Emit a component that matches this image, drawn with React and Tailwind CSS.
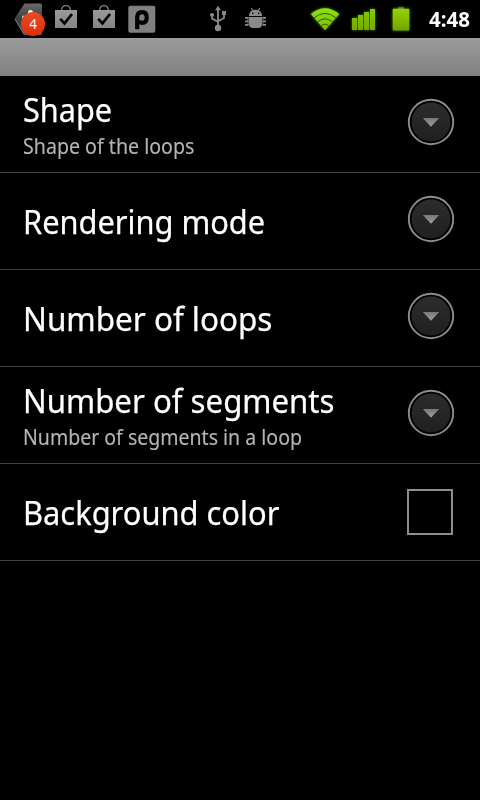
import React from 'react';

function AppBadge() {
  return (
    <svg className="block h-[38px] w-[34px]" viewBox="12 0 34 38">
      <defs>
        <linearGradient id="tag" x1="0" y1="0" x2="0" y2="1">
          <stop offset="0" stopColor="#6a6a6a" />
          <stop offset="0.5" stopColor="#3c3c3c" />
          <stop offset="1" stopColor="#5c5c5c" />
        </linearGradient>
        <linearGradient id="red" x1="0" y1="0" x2="0" y2="1">
          <stop offset="0" stopColor="#ea4a26" />
          <stop offset="1" stopColor="#de2d08" />
        </linearGradient>
      </defs>
      <path d="M24.5 3.5H40.5Q42 3.5 42 5V33.5Q42 35 40.5 35H24.5L15 20V18Z" fill="url(#tag)" />
      <path d="M15 19L24 34.5" stroke="#777" strokeWidth="1" />
      <circle cx="30.5" cy="12.3" r="2.4" fill="#fff" />
      <circle cx="23.5" cy="17" r="1.5" fill="#ccc" />
      <circle cx="33" cy="24" r="12" fill="url(#red)" />
      <text x="33" y="29" textAnchor="middle" fontSize="13.5" fill="#fff" fontFamily="Noto Sans, sans-serif">4</text>
    </svg>
  );
}

function BagIcon() {
  return (
    <svg className="block h-[38px] w-[22px]" viewBox="55 0 22 38">
      <defs>
        <linearGradient id="bag" x1="0" y1="0" x2="0" y2="1">
          <stop offset="0" stopColor="#999" />
          <stop offset="1" stopColor="#858585" />
        </linearGradient>
      </defs>
      <path d="M61.6 10.5C61.6 4 70.4 4 70.4 10.5" fill="none" stroke="#808080" strokeWidth="1.4" />
      <rect x="55" y="10" width="22" height="18" fill="url(#bag)" />
      <path d="M60.2 18.8L64.5 23.4L72 14" fill="none" stroke="#000" strokeWidth="2.7" />
    </svg>
  );
}

function PIcon() {
  return (
    <svg className="block h-[38px] w-[28px]" viewBox="128 0 28 38">
      <rect x="128.3" y="5.8" width="27" height="27" rx="2" fill="#808080" />
      <path d="M137.2 29.3V17.5C137.2 13.6 139 12.2 142 12.2C145.2 12.2 146.7 14 146.7 17.5C146.7 21 145.2 22.8 142.2 22.8C140.3 22.8 139 22.4 137.5 21.2" fill="none" stroke="#000" strokeWidth="4.2" />
    </svg>
  );
}

function UsbIcon() {
  return (
    <svg className="block h-[38px] w-[18px]" viewBox="209 0 18 38" fill="#8a8a8a" stroke="#8a8a8a">
      <path d="M218 9V26M212 17V18.6L218 21.8M224 15V18L218 21.3" fill="none" strokeWidth="1.8" />
      <path d="M218 5.8L221 10.3H215Z" stroke="none" />
      <circle cx="212" cy="15" r="2.1" stroke="none" />
      <rect x="222" y="11" width="4" height="4" stroke="none" />
      <circle cx="218" cy="28" r="3.2" stroke="none" />
    </svg>
  );
}

function DebugIcon() {
  return (
    <svg className="block h-[38px] w-[22px]" viewBox="245 0 22 38" fill="#8a8a8a">
      <path d="M249 16C249 12 251.8 9.8 255.5 9.8S262 12 262 16Z" />
      <path d="M251.3 8L253 11M259.7 8L258 11" stroke="#8a8a8a" strokeWidth="1.1" />
      <rect x="252" y="12.6" width="1.4" height="1.4" fill="#000" />
      <rect x="258" y="12.6" width="1.4" height="1.4" fill="#000" />
      <path d="M249 17H262V24Q262 28 258 28H253Q249 28 249 24Z" />
      <path d="M248 17V25.5M263 17V25.5" stroke="#8a8a8a" strokeWidth="0.8" />
      <path d="M248.4 17.9H245M248.4 21.4H245M248.4 24.9H245M262.6 17.9H266M262.6 21.4H266M262.6 24.9H266" fill="none" stroke="#8a8a8a" strokeWidth="1.7" />
    </svg>
  );
}

function WifiIcon() {
  return (
    <svg className="block h-[38px] w-[34px] drop-shadow-[0_0_1.5px_#5a9a00]" viewBox="308.5 0 34 38">
      <defs>
        <linearGradient id="wifi" x1="0" y1="0" x2="0" y2="1">
          <stop offset="0" stopColor="#8fe30c" />
          <stop offset="1" stopColor="#7cbd00" />
        </linearGradient>
      </defs>
      <path d="M311.3 14Q325.5 2.4 339.8 14L325.5 30.3Z" fill="url(#wifi)" />
      <path d="M314.6 17.8Q325.5 9 336.4 17.8M318.2 21.8Q325.5 15.8 332.8 21.8M321.8 25.8Q325.5 22.6 329.2 25.8" fill="none" stroke="#2f5a00" strokeWidth="1" />
    </svg>
  );
}

function SignalIcon() {
  return (
    <svg className="block h-[38px] w-[28px] drop-shadow-[0_0_1.5px_#4d8500]" viewBox="350 0 28 38">
      <defs>
        <linearGradient id="bars" gradientUnits="userSpaceOnUse" x1="0" y1="9" x2="0" y2="30">
          <stop offset="0" stopColor="#82cc00" />
          <stop offset="1" stopColor="#75a800" />
        </linearGradient>
      </defs>
      <g fill="url(#bars)">
        <rect x="352" y="18" width="5" height="12" />
        <rect x="358" y="15" width="5" height="15" />
        <rect x="364" y="12" width="5" height="18" />
        <rect x="370" y="9" width="5" height="21" />
      </g>
    </svg>
  );
}

function BatteryIcon() {
  return (
    <svg className="block h-[38px] w-[22px] drop-shadow-[0_0_1.5px_#4d8500]" viewBox="390 0 22 38">
      <defs>
        <linearGradient id="cell" x1="0" y1="0" x2="0" y2="1">
          <stop offset="0" stopColor="#92d400" />
          <stop offset="1" stopColor="#74a300" />
        </linearGradient>
      </defs>
      <path d="M398 9.5V8.5Q398 7.3 399.2 7.3H402.8Q404 7.3 404 8.5V9.5Z" fill="#777" />
      <rect x="392.7" y="8.8" width="16.6" height="21.7" rx="1" fill="url(#cell)" />
    </svg>
  );
}

function StatusBar() {
  return (
    <div className="flex h-[38px] items-start">
      <div className="ml-[12px]"><AppBadge /></div>
      <div className="ml-[9px]"><BagIcon /></div>
      <div className="ml-[16px]"><BagIcon /></div>
      <div className="ml-[13px]"><PIcon /></div>
      <div className="ml-[53px]"><UsbIcon /></div>
      <div className="ml-[18px]"><DebugIcon /></div>
      <div className="ml-[41px]"><WifiIcon /></div>
      <div className="ml-[8px]"><SignalIcon /></div>
      <div className="ml-[12px]"><BatteryIcon /></div>
      <div className="ml-[17px] origin-left scale-x-[0.975] text-[21px] leading-[39px] font-bold whitespace-nowrap text-white">4:48</div>
    </div>
  );
}

function MoreButton() {
  return (
    <svg className="block size-[48px]" viewBox="0 0 48 48">
      <defs>
        <linearGradient id="disc" x1="0" y1="0" x2="0" y2="1">
          <stop offset="0" stopColor="#2c2c2c" />
          <stop offset="1" stopColor="#202020" />
        </linearGradient>
        <linearGradient id="arrow" x1="0" y1="0" x2="0" y2="1">
          <stop offset="0" stopColor="#777" />
          <stop offset="1" stopColor="#a0a0a0" />
        </linearGradient>
      </defs>
      <circle cx="24" cy="24" r="22.2" fill="#000" stroke="#8c8c8c" strokeWidth="1.9" />
      <circle cx="24" cy="24" r="19.4" fill="url(#disc)" />
      <path d="M15.8 20H32.2L24 28.8Z" fill="url(#arrow)" />
    </svg>
  );
}

function Row({ title, scale, summary, summaryScale, children }) {
  return (
    <div className="flex h-[97px] items-center justify-between border-b border-[#424242] pl-[23px]">
      <div className="flex flex-col items-start">
        <div className={`origin-left text-[33.5px] leading-[42px] whitespace-nowrap text-white [-webkit-text-stroke:0.25px_#fff] ${scale}`}>{title}</div>
        {summary && (
          <div className={`mt-[2px] mb-px origin-left text-[21.5px] leading-[28px] whitespace-nowrap text-[#b4b4b4] [-webkit-text-stroke:0.15px_#b4b4b4] ${summaryScale}`}>{summary}</div>
        )}
      </div>
      {children}
    </div>
  );
}

export default function App() {
  return (
    <div className="h-[800px] w-[480px] overflow-hidden bg-black font-['Noto_Sans',sans-serif]">
      <StatusBar />
      <div className="h-[38px] bg-linear-to-b from-[#9c9c9c] to-[#808080]" />
      <Row title="Shape" scale="scale-x-[0.915]" summary="Shape of the loops" summaryScale="scale-x-[0.912]">
        <div className="mr-[25px] pb-[4px]"><MoreButton /></div>
      </Row>
      <Row title="Rendering mode" scale="scale-x-[0.919]">
        <div className="mr-[25px] pb-[4px]"><MoreButton /></div>
      </Row>
      <Row title="Number of loops" scale="scale-x-[0.938]">
        <div className="mr-[25px] pb-[4px]"><MoreButton /></div>
      </Row>
      <Row title="Number of segments" scale="scale-x-[0.931]" summary="Number of segments in a loop" summaryScale="scale-x-[0.908]">
        <div className="mr-[25px] pb-[4px]"><MoreButton /></div>
      </Row>
      <Row title="Background color" scale="scale-x-[0.921]">
        <div className="mr-[27px] size-[46px] border-2 border-[#8c8c8c]" />
      </Row>
    </div>
  );
}
